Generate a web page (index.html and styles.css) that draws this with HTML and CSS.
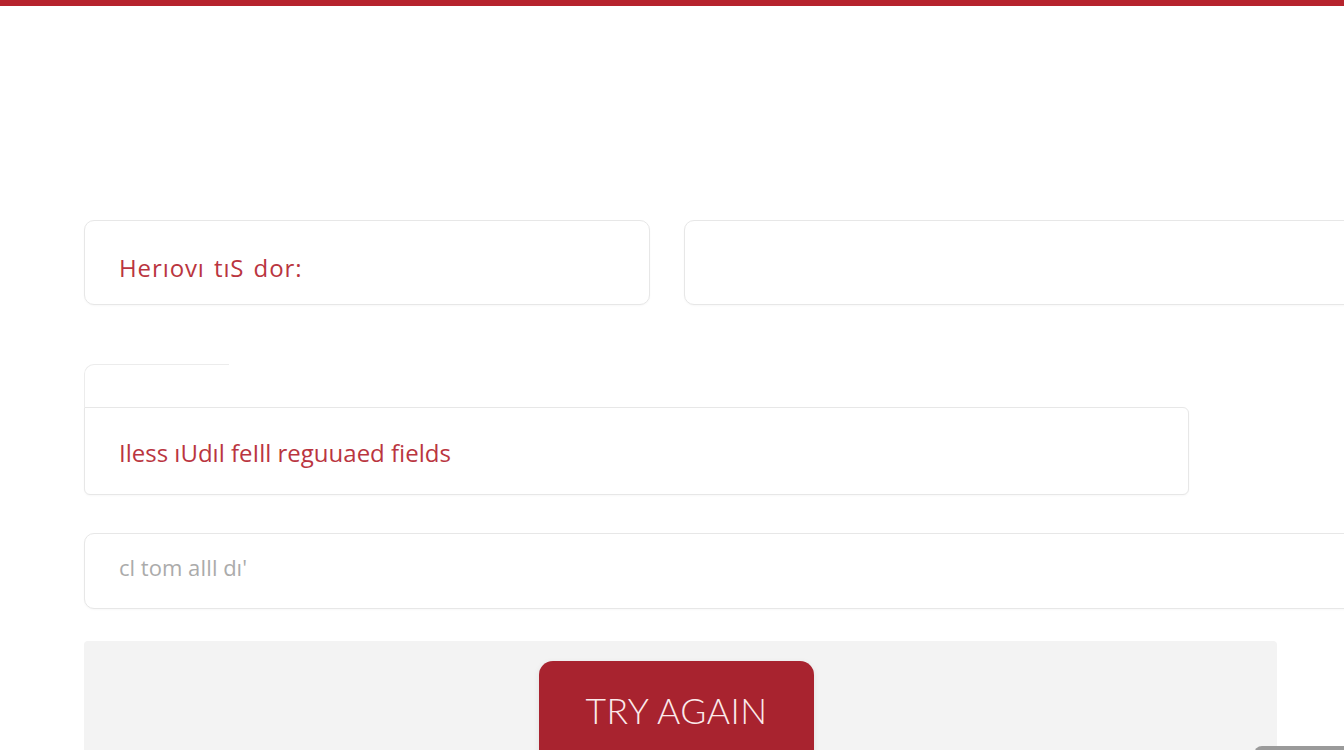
FILE: index.html
```html
<!DOCTYPE html>
<html lang="en">
<head>
<meta charset="utf-8">
<title>Form error</title>
<link rel="stylesheet" href="styles.css">
</head>
<body>
<div class="topbar"></div>
<main class="form">
  <div class="row-top">
    <div class="field field-error"><span class="err-text err-1">Herıovı tıS dor:</span></div>
    <div class="field field-empty"></div>
  </div>
  <div class="group">
    <div class="tab"></div>
    <div class="field field-msg"><span class="err-text err-2">Iless ıUdıl feIll reguuaed fields</span></div>
  </div>
  <div class="field field-input"><span class="placeholder">cl tom aIll dı'</span></div>
  <div class="panel">
    <button class="btn">TRY AGAIN</button>
  </div>
</main>
<div class="corner"></div>
</body>
</html>
```

FILE: styles.css
```css
html, body {
  margin: 0;
  padding: 0;
  width: 1344px;
  height: 750px;
  overflow: hidden;
  background: #ffffff;
  font-family: "Open Sans", "Liberation Sans", sans-serif;
}

.topbar {
  height: 6px;
  background: #b6232d;
}

.form {
  padding: 214px 0 0 84px;
  display: flex;
  flex-direction: column;
}

.row-top {
  display: flex;
  gap: 34px;
}

.field {
  flex: none;
  box-sizing: border-box;
  border: 1px solid #e7e7e7;
  border-radius: 10px;
  background: #fff;
  box-shadow: 0 1px 2px rgba(0,0,0,0.03);
  display: flex;
  align-items: center;
  padding-left: 34px;
}

.field-error {
  width: 566px;
  height: 85px;
}

.field-empty {
  width: 720px;
  height: 85px;
}

.err-text {
  color: #ba3540;
  font-size: 24px;
  letter-spacing: -0.2px;
}

.err-1 {
  padding-top: 10px;
  word-spacing: 2px;
  letter-spacing: 0.9px;
}

.err-2 {
  padding-top: 3px;
  letter-spacing: 0;
}

.group {
  margin-top: 59px;
  display: flex;
  flex-direction: column;
}

.tab {
  width: 145px;
  height: 43px;
  box-sizing: border-box;
  border-top: 1px solid #ececec;
  border-left: 1px solid #ececec;
  border-top-left-radius: 10px;
}

.field-msg {
  width: 1105px;
  height: 88px;
  border-radius: 0 6px 6px 6px;
}

.field-input {
  margin-top: 38px;
  width: 1300px;
  height: 76px;
}

.placeholder {
  color: #ababab;
  font-size: 22px;
  padding-bottom: 8px;
}

.panel {
  margin-top: 32px;
  width: 1193px;
  height: 140px;
  background: #f3f3f3;
  border-radius: 4px;
  display: flex;
  justify-content: center;
  padding-top: 20px;
  box-sizing: border-box;
  padding-right: 8px;
}

.btn {
  width: 275px;
  height: 110px;
  border: none;
  border-radius: 14px;
  background: #a8232f;
  color: #fbe9ea;
  font-family: "Lato", "Open Sans", sans-serif;
  font-weight: 300;
  font-size: 35.5px;
  letter-spacing: 0.5px;
  padding-bottom: 12px;
  box-shadow: 0 2px 6px rgba(0,0,0,0.08);
}

.corner {
  position: absolute;
  right: -20px;
  bottom: -10px;
  width: 110px;
  height: 14px;
  background: #9a9a9a;
  border-radius: 8px 0 0 0;
}
```
